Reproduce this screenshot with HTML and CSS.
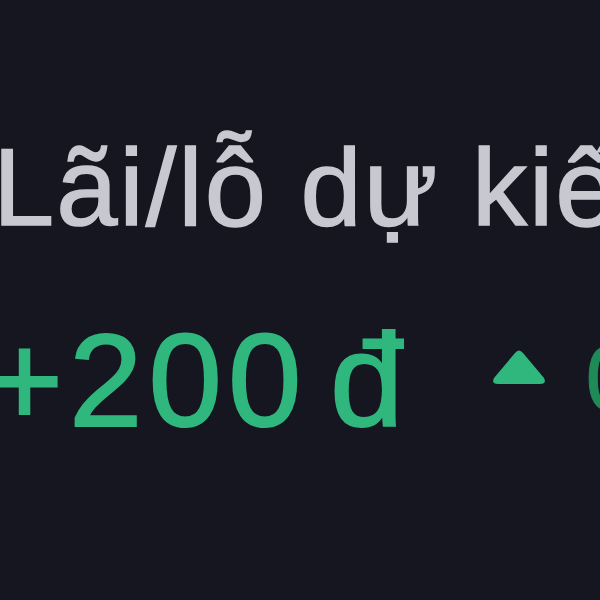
FILE: index.html
```html
<!DOCTYPE html>
<html lang="vi">

<head>
  <meta charset="UTF-8">
  <meta name="viewport" content="width=device-width, initial-scale=1.0">
  <title>Lãi/lỗ dự kiến</title>
  <link rel="stylesheet" href="styles.css">
</head>

<body>
  <div class="pnl">
    <div class="pnl-label">Lãi/lỗ dự kiến</div>
    <div class="pnl-value">
      <span class="amount">+200 đ</span>
      <svg class="arrow" width="56" height="36" viewBox="0 0 56 36">
        <path d="M24 4 Q28 -1 32 4 L53 29 Q56 35 49 35 L7 35 Q0 35 3 29 Z" fill="#2fb77d" />
      </svg>
      <span class="percent">0,5%</span>
    </div>
  </div>
</body>

</html>
```

FILE: styles.css
```css
body {
  margin: 0;
  background-color: #161621;
  overflow: hidden;
  height: 600px;
  font-family: "Liberation Sans", Arial, sans-serif;
}

.pnl {
  padding-top: 122px;
  white-space: nowrap;
}

.pnl-label {
  margin-left: -7px;
  font-size: 110px;
  line-height: 130px;
  letter-spacing: 2px;
  color: #c8c8d0;
  -webkit-text-stroke: 1.5px #c8c8d0;
}

.pnl-value {
  display: flex;
  align-items: flex-start;
  margin-top: 63px;
  margin-left: -14px;
  color: #2fb77d;
}

.amount {
  font-size: 132px;
  line-height: 132px;
  letter-spacing: 6px;
  word-spacing: -20px;
  -webkit-text-stroke: 2px #2fb77d;
}

.arrow {
  flex-shrink: 0;
  margin-left: 82px;
  margin-top: 34px;
}

.percent {
  margin-left: 38px;
  margin-top: 17px;
  font-size: 92px;
  line-height: 92px;
  color: #1e8a58;
  -webkit-text-stroke: 1px #1e8a58;
}
```
